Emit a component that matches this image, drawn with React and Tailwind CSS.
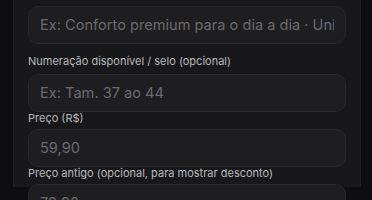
import React from "react";

const font = { fontFamily: "Inter, 'Noto Sans', sans-serif" };

function Label({ children, className = "" }) {
  return (
    <div className={`text-[11px] leading-[12px] text-[#b8b8bd] ${className}`}>{children}</div>
  );
}

function Field({ placeholder, className = "" }) {
  return (
    <input
      readOnly
      placeholder={placeholder}
      className={`block w-full h-[38px] rounded-[10px] border border-[#28282c] bg-[#1e1e21] px-[11px] text-[14.6px] text-[#d4d4d8] placeholder:text-[#6a6a6f] outline-none ${className}`}
      style={font}
    />
  );
}

export default function App() {
  return (
    <div className="h-[200px] w-[372px] overflow-hidden bg-[#0e0e10] pl-[13px] pr-[11px]" style={font}>
      <div className="h-full border-x border-[#202023] bg-[#18181a] pl-[14px] pr-[14px]">
        <div className="-mt-[13px] flex flex-col">
          <Label className="mb-[7px]">Frase de destaque (opcional) · página do produto</Label>
          <Field placeholder="Ex: Conforto premium para o dia a dia · Unissex" />
          <Label className="mt-[11px] mb-[7px]">Numeração disponível / selo (opcional)</Label>
          <Field placeholder="Ex: Tam. 37 ao 44" className="h-[37px]" />
          <Label className="mb-[5px]">Preço (R$)</Label>
          <Field placeholder="59,90" className="h-[37px]" />
          <Label className="mb-[5px]">Preço antigo (opcional, para mostrar desconto)</Label>
          <Field placeholder="79,90" />
        </div>
      </div>
    </div>
  );
}
